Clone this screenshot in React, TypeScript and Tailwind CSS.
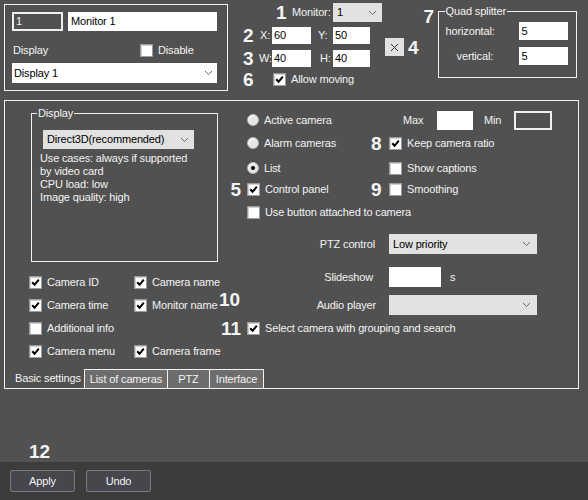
import React from "react";

function Chevron() {
  return (
    <svg width="9" height="6" viewBox="0 0 9 6" className="shrink-0">
      <path d="M1 1 L4.5 4.5 L8 1" fill="none" stroke="#6a6a6a" strokeWidth="1" />
    </svg>
  );
}

function Check({ checked }: { checked?: boolean }) {
  return (
    <span className="w-[13px] h-[13px] bg-white border border-[#9c9c9c] shadow-[inset_1px_1px_0_#d0d0d0] flex items-center justify-center shrink-0">
      {checked && (
        <svg width="9" height="9" viewBox="0 0 9 9">
          <path d="M1.2 4.2 L3.6 6.8 L7.8 1.6" fill="none" stroke="#000" strokeWidth="2" />
        </svg>
      )}
    </span>
  );
}

function Radio({ checked }: { checked?: boolean }) {
  return (
    <span className="w-[12px] h-[12px] rounded-full bg-[#e6e6e6] border border-[#b4b4b4] shadow-[inset_1px_1px_1px_#ffffff] flex items-center justify-center shrink-0">
      {checked && <span className="w-[4px] h-[4px] rounded-full bg-black" />}
    </span>
  );
}

function Num({ children, className }: { children: React.ReactNode; className?: string }) {
  return (
    <span className={"font-bold text-[19px] leading-[19px] tracking-normal text-[#f4f4f4] shrink-0 " + (className || "")}>
      {children}
    </span>
  );
}

export default function App() {
  return (
    <div className="w-[588px] h-[500px] bg-[#515151] text-[#f3f3f3] text-[11px] leading-[13px] tracking-[-0.15px] whitespace-nowrap font-['Liberation_Sans',Arial,sans-serif] flex flex-col overflow-hidden">
      {/* TOP AREA */}
      <div className="h-[100px] flex shrink-0">
        {/* Monitor group */}
        <div className="mt-[4px] ml-[4px] w-[224px] h-[87px] border border-[#f0f0f0] pl-[7px] pt-[7px] flex flex-col shrink-0">
          <div className="flex gap-[5px]">
            <div className="w-[51px] h-[19px] border-2 border-[#f0f0f0] bg-[#515151] pl-[2px] flex items-center">1</div>
            <div className="w-[149px] h-[19px] bg-white text-black pl-[3px] flex items-center">Monitor 1</div>
          </div>
          <div className="mt-[12px] h-[14px] flex items-center">
            <span className="w-[128px] pl-[1px] shrink-0">Display</span>
            <Check />
            <span className="ml-[5px]">Disable</span>
          </div>
          <div className="mt-[6px] w-[205px] h-[20px] bg-white text-black pl-[2px] pr-[4px] flex items-center justify-between">
            <span>Display 1</span>
            <Chevron />
          </div>
        </div>

        {/* Position block */}
        <div className="ml-[15px] mt-[3px] w-[139px] flex flex-col shrink-0">
          <div className="h-[19px] flex items-center pl-[33px]">
            <Num className="w-[16px]">1</Num>
            <span className="w-[41px] shrink-0">Monitor:</span>
            <div className="w-[49px] h-[19px] bg-[#e1e1e1] text-black pl-[4px] pr-[5px] flex items-center justify-between shrink-0">
              <span>1</span>
              <Chevron />
            </div>
          </div>
          <div className="mt-[5px] h-[17px] flex items-center">
            <Num className="w-[17px]">2</Num>
            <span className="w-[12px] shrink-0">X:</span>
            <div className="w-[39px] h-[17px] bg-white text-black pl-[2px] flex items-center shrink-0">60</div>
            <span className="ml-[7px] w-[15px] shrink-0">Y:</span>
            <div className="w-[37px] h-[17px] bg-white text-black pl-[2px] flex items-center shrink-0">50</div>
          </div>
          <div className="mt-[6px] h-[17px] flex items-center">
            <Num className="w-[16px]">3</Num>
            <span className="w-[13px] shrink-0">W:</span>
            <div className="w-[39px] h-[17px] bg-white text-black pl-[2px] flex items-center shrink-0">40</div>
            <span className="ml-[9px] w-[13px] shrink-0">H:</span>
            <div className="w-[37px] h-[17px] bg-white text-black pl-[2px] flex items-center shrink-0">40</div>
          </div>
          <div className="mt-[6px] h-[13px] flex items-center">
            <Num className="w-[30px]">6</Num>
            <Check checked />
            <span className="ml-[5px]">Allow moving</span>
          </div>
        </div>

        {/* X button */}
        <div className="ml-[3px] mt-[38px] h-[18px] flex items-center shrink-0">
          <div className="w-[19px] h-[18px] bg-[#e1e1e1] flex items-center justify-center">
            <svg width="9" height="9" viewBox="0 0 9 9">
              <path d="M1 1 L8 8 M8 1 L1 8" stroke="#333" strokeWidth="1" fill="none" />
            </svg>
          </div>
          <Num className="ml-[4px]">4</Num>
        </div>

        {/* Quad splitter */}
        <div className="ml-[5px] mt-[7px] flex items-start shrink-0">
          <Num className="w-[14px]">7</Num>
          <div className="relative mt-[4px] w-[139px] h-[67px] border border-[#f0f0f0] pt-[10px] flex flex-col">
            <span className="absolute -top-[7px] left-[6px] bg-[#515151] px-[1px]">Quad splitter</span>
            <div className="h-[18px] flex items-center pl-[7px]">
              <span className="w-[73px] shrink-0">horizontal:</span>
              <div className="w-[49px] h-[18px] bg-white text-black pl-[3px] flex items-center">5</div>
            </div>
            <div className="mt-[7px] h-[18px] flex items-center pl-[18px]">
              <span className="w-[62px] shrink-0">vertical:</span>
              <div className="w-[49px] h-[18px] bg-white text-black pl-[3px] flex items-center">5</div>
            </div>
          </div>
        </div>
      </div>

      {/* MAIN PANEL */}
      <div className="ml-[4px] w-[575px] h-[289px] border border-[#f0f0f0] flex flex-col shrink-0">
        <div className="flex-1 flex">
          {/* Left column */}
          <div className="w-[214px] flex flex-col shrink-0">
            <div className="relative ml-[26px] mt-[12px] w-[187px] h-[149px] border border-[#f0f0f0] pt-[16px] flex flex-col">
              <span className="absolute -top-[7px] left-[5px] bg-[#515151] px-[1px]">Display</span>
              <div className="ml-[11px] w-[151px] h-[19px] bg-[#e1e1e1] text-black pl-[4px] pr-[5px] flex items-center justify-between">
                <span>Direct3D(recommended)</span>
                <Chevron />
              </div>
              <div className="mt-[3px] pl-[8px] flex flex-col">
                <span>Use cases: always if supported</span>
                <span>by video card</span>
                <span>CPU load: low</span>
                <span>Image quality: high</span>
              </div>
            </div>
            <div className="mt-[14px] pl-[24px] grid grid-cols-[105px_1fr] gap-y-[10px]">
              <div className="h-[13px] flex items-center"><Check checked /><span className="ml-[5px]">Camera ID</span></div>
              <div className="h-[13px] flex items-center"><Check checked /><span className="ml-[5px]">Camera name</span></div>
              <div className="h-[13px] flex items-center"><Check checked /><span className="ml-[5px]">Camera time</span></div>
              <div className="h-[13px] flex items-center"><Check checked /><span className="ml-[5px]">Monitor name</span></div>
              <div className="h-[13px] flex items-center"><Check /><span className="ml-[5px]">Additional info</span></div>
              <div className="h-[13px]" />
              <div className="h-[13px] flex items-center"><Check checked /><span className="ml-[5px]">Camera menu</span></div>
              <div className="h-[13px] flex items-center"><Check checked /><span className="ml-[5px]">Camera frame</span></div>
            </div>
          </div>

          {/* Right column */}
          <div className="flex-1 flex flex-col pt-[8px]">
            <div className="h-[22px] flex items-center">
              <div className="w-[152px] shrink-0 flex items-center pl-[28px]"><Radio /><span className="ml-[5px]">Active camera</span></div>
              <div className="flex items-center pl-[32px]">
                <span className="w-[34px] shrink-0">Max</span>
                <div className="w-[36px] h-[19px] bg-white shrink-0" />
                <span className="ml-[11px] w-[30px] shrink-0">Min</span>
                <div className="w-[38px] h-[19px] border-2 border-[#f0f0f0] shrink-0" />
              </div>
            </div>
            <div className="h-[24px] flex items-center">
              <div className="w-[152px] shrink-0 flex items-center pl-[28px]"><Radio /><span className="ml-[5px]">Alarm cameras</span></div>
              <div className="flex items-center">
                <Num className="w-[18px]">8</Num>
                <Check checked />
                <span className="ml-[5px]">Keep camera ratio</span>
              </div>
            </div>
            <div className="h-[26px] flex items-center">
              <div className="w-[152px] shrink-0 flex items-center pl-[28px]"><Radio checked /><span className="ml-[5px]">List</span></div>
              <div className="flex items-center pl-[18px]">
                <Check />
                <span className="ml-[5px]">Show captions</span>
              </div>
            </div>
            <div className="h-[16px] flex items-center">
              <div className="w-[152px] shrink-0 flex items-center">
                <Num className="w-[28px] text-right pr-[6px]">5</Num>
                <Check checked />
                <span className="ml-[5px]">Control panel</span>
              </div>
              <div className="flex items-center">
                <Num className="w-[18px]">9</Num>
                <Check />
                <span className="ml-[5px]">Smoothing</span>
              </div>
            </div>
            <div className="h-[30px] flex items-center pl-[28px]">
              <Check />
              <span className="ml-[5px]">Use button attached to camera</span>
            </div>

            <div className="mt-[7px] h-[20px] flex items-center">
              <span className="w-[156px] shrink-0 text-right">PTZ control</span>
              <div className="ml-[14px] w-[148px] h-[20px] bg-[#e1e1e1] text-black pl-[4px] pr-[6px] flex items-center justify-between">
                <span>Low priority</span>
                <Chevron />
              </div>
            </div>
            <div className="mt-[13px] h-[20px] flex items-center">
              <span className="w-[154px] shrink-0 text-right">Slideshow</span>
              <div className="ml-[16px] w-[52px] h-[20px] bg-white" />
              <span className="ml-[9px]">s</span>
            </div>
            <div className="mt-[8px] h-[20px] flex items-center">
              <div className="w-[157px] shrink-0 flex items-center justify-between">
                <Num className="self-start -mt-[9px]">10</Num>
                <span>Audio player</span>
              </div>
              <div className="ml-[13px] w-[148px] h-[20px] bg-[#e1e1e1] pr-[6px] flex items-center justify-end">
                <Chevron />
              </div>
            </div>
            <div className="mt-[6px] h-[14px] flex items-center">
              <Num className="w-[28px] text-right pr-[6px]">11</Num>
              <Check checked />
              <span className="ml-[5px]">Select camera with grouping and search</span>
            </div>
          </div>
        </div>

        {/* Tabs */}
        <div className="h-[19px] flex items-stretch shrink-0">
          <div className="w-[79px] pl-[10px] flex items-center">Basic settings</div>
          <div className="w-[83px] bg-[#6d6d6d] border-l border-t border-[#f0f0f0] flex items-center justify-center">List of cameras</div>
          <div className="w-[42px] bg-[#6d6d6d] border-l border-t border-[#f0f0f0] flex items-center justify-center">PTZ</div>
          <div className="w-[55px] bg-[#6d6d6d] border-l border-t border-r border-[#f0f0f0] flex items-center justify-center">Interface</div>
        </div>
      </div>

      {/* spacer with 12 */}
      <div className="flex-1 flex items-end pl-[29px] pb-[1px]">
        <Num>12</Num>
      </div>

      {/* Bottom bar */}
      <div className="h-[38px] bg-[#3c3c3c] flex items-start pt-[8px] pl-[10px] gap-[11px] shrink-0">
        <div className="w-[65px] h-[22px] bg-[#46464c] border border-[#7a7a7a] rounded-[2px] flex items-center justify-center">Apply</div>
        <div className="w-[65px] h-[22px] bg-[#46464c] border border-[#7a7a7a] rounded-[2px] flex items-center justify-center">Undo</div>
      </div>
    </div>
  );
}
